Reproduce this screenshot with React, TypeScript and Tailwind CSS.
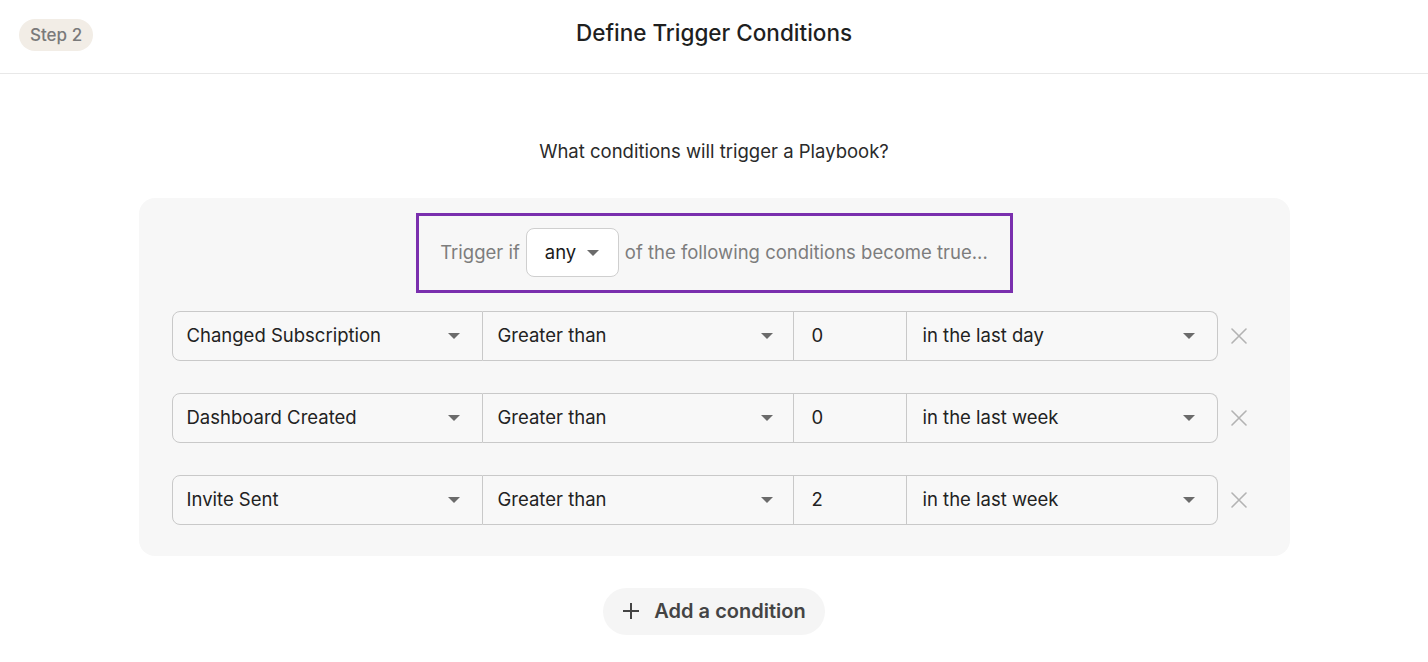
import React from 'react';

const Caret = () => (
    <svg width="12" height="6" viewBox="0 0 12 6" className="shrink-0">
        <path d="M0 0 L12 0 L6 6 Z" fill="#6b6b6b" />
    </svg>
);

const rows = [
    { event: 'Changed Subscription', op: 'Greater than', value: '0', range: 'in the last day' },
    { event: 'Dashboard Created', op: 'Greater than', value: '0', range: 'in the last week' },
    { event: 'Invite Sent', op: 'Greater than', value: '2', range: 'in the last week' },
];

const ConditionRow = ({ event, op, value, range }: { event: string; op: string; value: string; range: string }) => {
    return (
        <div className="flex items-center">
            <div className="flex h-[50px] text-[18.5px] text-[#222]">
                <div className="w-[311px] flex items-center justify-between pl-[14px] pr-[22px] border border-[#c9c9c9] rounded-l-lg bg-[#f8f8f8]">
                    <span>{event}</span>
                    <Caret />
                </div>
                <div className="w-[311px] flex items-center justify-between pl-[15px] pr-[20px] border-y border-r border-[#c9c9c9] bg-[#f8f8f8]">
                    <span>{op}</span>
                    <Caret />
                </div>
                <div className="w-[113px] flex items-center pl-[18px] border-y border-r border-[#c9c9c9] bg-[#f8f8f8]">
                    {value}
                </div>
                <div className="w-[311px] flex items-center justify-between pl-[16px] pr-[22px] border-y border-r border-[#c9c9c9] rounded-r-lg bg-[#f8f8f8]">
                    <span>{range}</span>
                    <Caret />
                </div>
            </div>
            <svg width="16" height="16" viewBox="0 0 16 16" className="ml-[13px]">
                <path d="M1 1 L15 15 M15 1 L1 15" stroke="#b3b3b3" strokeWidth="1.6" strokeLinecap="round" />
            </svg>
        </div>
    );
};

const App = () => {
    return (
        <div className="min-h-[662px] bg-white" style={{ fontFamily: 'Inter, "Noto Sans", sans-serif' }}>
            <div className="relative h-[74px] border-b border-[#e8e8e8] flex items-center justify-center">
                <div className="absolute left-[19px] top-[19px] h-[32px] px-[11px] rounded-full bg-[#f2ede6] text-[#7a7a7a] text-[17px] font-medium flex items-center pt-[1px]">
                    Step 2
                </div>
                <h1 className="text-[22.5px] font-medium text-[#1f1f1f] -mt-[8px]">Define Trigger Conditions</h1>
            </div>

            <div className="flex flex-col items-center">
                <p className="mt-[64px] text-[18.5px] text-[#2a2a2a]">What conditions will trigger a Playbook?</p>

                <div className="mt-[32px] w-[1151px] rounded-2xl bg-[#f7f7f7] pt-[15px] pb-[31px] px-[33px] flex flex-col items-center">
                    <div className="w-[597px] h-[80px] border-[3px] border-[#7a2fae] flex items-center justify-center gap-[6px] text-[18.5px] text-[#7d7d7d]">
                        <span>Trigger if</span>
                        <div className="w-[93px] h-[49px] rounded-lg border border-[#cfcfcf] bg-white flex items-center justify-between pl-[18px] pr-[19px] text-[#1a1a1a]">
                            <span>any</span>
                            <Caret />
                        </div>
                        <span>of the following conditions become true...</span>
                    </div>

                    <div className="self-start mt-[18px] flex flex-col gap-[32px]">
                        {rows.map((r) => (
                            <ConditionRow key={r.event} {...r} />
                        ))}
                    </div>
                </div>

                <button className="mt-[32px] h-[47px] px-[19px] rounded-full bg-[#f5f5f5] flex items-center gap-[14px] text-[20px] font-semibold text-[#444]">
                    <svg width="18" height="18" viewBox="0 0 18 18">
                        <path d="M9 1 V17 M1 9 H17" stroke="#444" strokeWidth="2" />
                    </svg>
                    Add a condition
                </button>
            </div>
        </div>
    );
};

export default App;
